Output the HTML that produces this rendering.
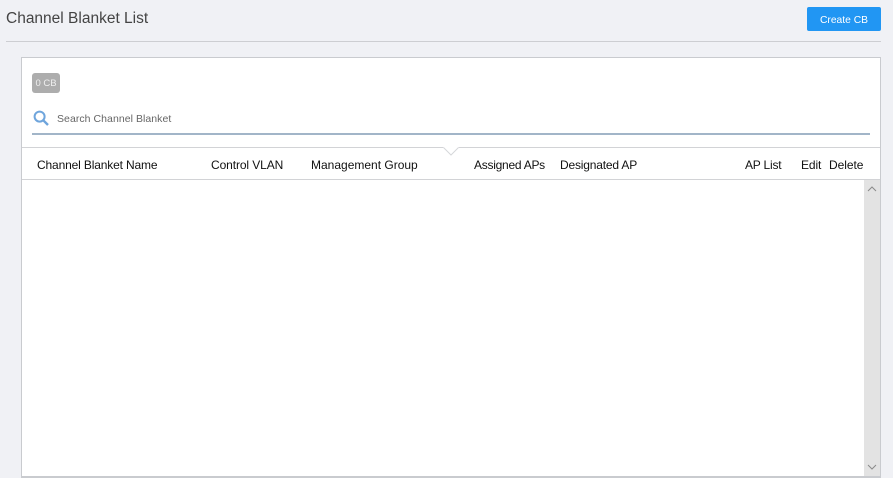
<!DOCTYPE html>
<html>
<head>
<meta charset="utf-8">
<style>
html,body{margin:0;padding:0}
body{width:893px;height:478px;background:#f0f1f5;position:relative;overflow:hidden;font-family:"Liberation Sans",sans-serif;color:#1a1a1a}
.a{position:absolute;white-space:nowrap}
.h{top:158px;font-size:12px;line-height:14px;color:#111}
</style>
</head>
<body>
<div class="a" style="left:6px;top:9px;font-size:15.5px;line-height:19px;color:#444">Channel Blanket List</div>
<div class="a" style="left:807px;top:7px;width:74px;height:24px;background:#2196f3;border-radius:2px;color:#fff;font-size:10.3px;line-height:28px;text-align:center">Create CB</div>
<div class="a" style="left:6px;top:41px;width:875px;height:1px;background:#cdced2"></div>

<div class="a" style="left:21px;top:57px;width:858px;height:418px;background:#fff;border:1px solid #c9cbcf;border-bottom-width:2px"></div>

<div class="a" style="left:32px;top:73px;width:28px;height:20px;background:#adadad;border-radius:3px;color:#f0f0f0;font-size:9.500px;line-height:21px;text-align:center">0 CB</div>

<svg class="a" style="left:33px;top:110px" width="16" height="16" viewBox="0 0 16 16"><circle cx="6.6" cy="6.6" r="5" fill="none" stroke="#6fa5dc" stroke-width="2"/><path d="M10.3 10.3L15 15" stroke="#6fa5dc" stroke-width="2.4" fill="none"/></svg>
<div class="a" style="left:57px;top:112px;font-size:10.5px;line-height:14px;color:#666;letter-spacing:.05px">Search Channel Blanket</div>
<div class="a" style="left:32px;top:133px;width:838px;height:2px;background:#a2b5c8"></div>

<div class="a" style="left:22px;top:147px;width:858px;height:1px;background:#d2d3d6"></div>
<div class="a" style="left:22px;top:179px;width:858px;height:1px;background:#d2d3d6"></div>
<svg class="a" style="left:443px;top:147px" width="16" height="9" viewBox="0 0 16 9"><path d="M0 0L8 8L16 0Z" fill="#fff"/><path d="M.5 0.500L8 8L15.500 0.500" fill="none" stroke="#d6d7da"/></svg>

<div class="a h" style="left:37px;letter-spacing:-.15px">Channel Blanket Name</div>
<div class="a h" style="left:211px;letter-spacing:-.1px">Control VLAN</div>
<div class="a h" style="left:311px">Management Group</div>
<div class="a h" style="left:474px;letter-spacing:-.26px">Assigned APs</div>
<div class="a h" style="left:560px;letter-spacing:-.18px">Designated AP</div>
<div class="a h" style="left:745px;letter-spacing:-.2px">AP List</div>
<div class="a h" style="left:801px;letter-spacing:-.1px">Edit</div>
<div class="a h" style="left:829px;letter-spacing:-.05px">Delete</div>

<div class="a" style="left:864px;top:180px;width:16px;height:296px;background:#e3e3e3"></div>
<svg class="a" style="left:864px;top:180px" width="16" height="296" viewBox="0 0 16 296"><path d="M4 11L8 7L12 11" fill="none" stroke="#8a8a8a"/><path d="M4 285L8 289L12 285" fill="none" stroke="#8a8a8a"/></svg>
</body>
</html>
